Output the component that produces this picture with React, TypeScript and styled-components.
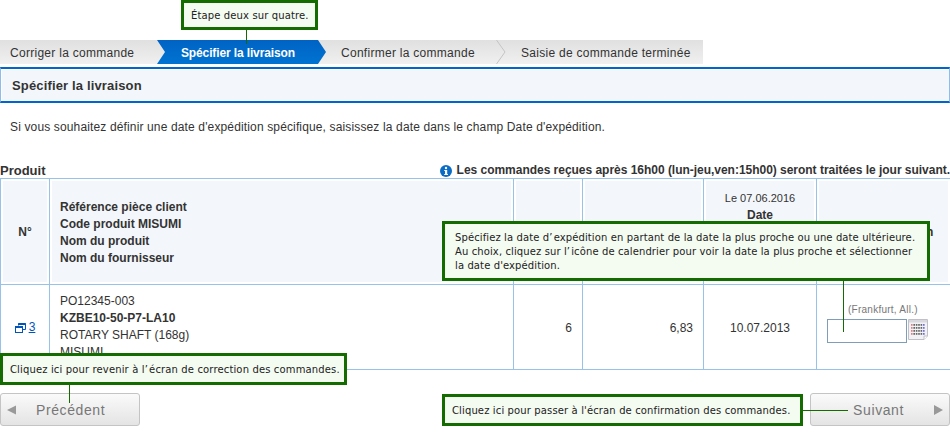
import styled, { createGlobalStyle } from "styled-components";

const GlobalStyle = createGlobalStyle`
  html, body {
    margin: 0;
    padding: 0;
    background: #fff;
  }
  body {
    font-family: "Liberation Sans", Arial, sans-serif;
    font-size: 12px;
    color: #333;
  }
`;

const Page = styled.div`
  position: relative;
  width: 950px;
  height: 440px;
  overflow: hidden;
  padding-top: 40px;
  box-sizing: border-box;
`;

const Steps = styled.div`
  display: flex;
  width: 703px;
  height: 24px;
  background: linear-gradient(#e0e0e0, #f0f0f0);
`;

const Step = styled.div<{ $width: number; $pad: number; $active?: boolean }>`
  position: relative;
  width: ${(props) => props.$width}px;
  padding-left: ${(props) => props.$pad}px;
  box-sizing: border-box;
  line-height: 26px;
  white-space: nowrap;
  letter-spacing: ${(props) => (props.$active ? "-0.13px" : "0.28px")};
  color: ${(props) => (props.$active ? "#fff" : "#333")};
  font-weight: ${(props) => (props.$active ? 700 : 400)};
  background: ${(props) =>
    props.$active ? "linear-gradient(#0063c4, #0073d2)" : "transparent"};
  clip-path: ${(props) =>
    props.$active
      ? "polygon(0 0, 161px 0, 169px 50%, 161px 100%, 0 100%, 8px 50%)"
      : "none"};
`;

const StepChevron = styled.svg`
  position: absolute;
  top: 0;
  right: -9px;
  width: 10px;
  height: 24px;
`;

const Heading = styled.h1`
  margin: 3px 0 0;
  height: 36px;
  box-sizing: border-box;
  border-top: 2px solid #0066cc;
  border-bottom: 2px solid #0066cc;
  border-left: 1px solid #8fbce8;
  border-right: 1px solid #8fbce8;
  background: #f3f7fb;
  box-shadow: inset 0 1px 0 #fff, inset 1px 0 0 #fff;
  padding-left: 11px;
  font-size: 13px;
  line-height: 33px;
  font-weight: 700;
  color: #333;
  letter-spacing: 0.15px;
`;

const Intro = styled.p`
  margin: 16px 0 0 10px;
  line-height: 17px;
  height: 17px;
  letter-spacing: 0.14px;
`;

const Caption = styled.div`
  display: flex;
  justify-content: space-between;
  align-items: flex-end;
  margin-top: 27px;
  height: 15px;
  font-weight: 700;
`;

const CaptionTitle = styled.span`
  font-size: 13px;
  line-height: 15px;
  margin-top: 1px;
`;

const Notice = styled.span`
  display: flex;
  align-items: center;
  gap: 5px;
  font-size: 12px;
  line-height: 15px;
  letter-spacing: -0.025px;
  white-space: nowrap;
`;

const Table = styled.table`
  width: 950px;
  border-collapse: collapse;
  table-layout: fixed;
  line-height: 17px;
`;

const Th = styled.th`
  height: 106px;
  box-sizing: border-box;
  padding: 2px 0 0;
  border: 1px solid #99c2e8;
  background: #f3f7fb;
  box-shadow: inset 0 0 0 2px #fff;
  font-weight: 700;
  text-align: center;
`;

const ThLeft = styled(Th)`
  text-align: left;
  padding-left: 10px;
`;

const ThDate = styled(Th)`
  vertical-align: top;
  padding-top: 11px;
`;

const DateSmall = styled.div`
  font-weight: 400;
  font-size: 11px;
`;

const Td = styled.td`
  height: 85px;
  box-sizing: border-box;
  padding: 3px 0 0;
  border: 1px solid #99c2e8;
  vertical-align: middle;
  text-align: center;
`;

const ProductCell = styled(Td)`
  text-align: left;
  padding: 8px 10px 0;
  vertical-align: top;
  overflow: hidden;
`;

const NumCell = styled(Td)`
  text-align: right;
  padding-right: 10px;
`;

const NoLink = styled.a`
  display: inline-flex;
  align-items: center;
  gap: 3px;
  color: #0055bb;
  text-decoration: underline;
  font-size: 12px;
`;

const ShipCell = styled(Td)`
  padding: 19px 0 0 10px;
  text-align: left;
  vertical-align: top;
`;

const ShipLabel = styled.div`
  font-size: 10px;
  line-height: 12px;
  color: #777;
  padding-left: 21px;
  letter-spacing: 0.25px;
`;

const ShipRow = styled.div`
  display: flex;
  align-items: flex-start;
  gap: 1px;
  margin-top: 3px;
`;

const DateInput = styled.input`
  width: 80px;
  height: 24px;
  box-sizing: border-box;
  border: 1px solid #7f9db9;
  background: #fff;
  padding: 0;
`;

const Nav = styled.div`
  display: flex;
  justify-content: space-between;
  margin-top: 23px;
`;

const NavButton = styled.button<{ $dir: "prev" | "next" }>`
  display: flex;
  flex-direction: ${(props) => (props.$dir === "prev" ? "row" : "row-reverse")};
  align-items: center;
  width: 140px;
  height: 33px;
  box-sizing: border-box;
  padding: 0 6px;
  border: 1px solid #c4c4c4;
  border-radius: 3px;
  background: linear-gradient(#fafafa, #e4e4e4);
  color: #777;
  font-family: inherit;
  font-size: 14px;
  letter-spacing: 0.6px;
`;

const NavLabel = styled.span<{ $dir: "prev" | "next" }>`
  flex: 1;
  text-align: ${(props) => (props.$dir === "prev" ? "left" : "right")};
  padding: ${(props) => (props.$dir === "prev" ? "0 0 0 20px" : "0 30px 0 0")};
`;

const Callout = styled.div<{
  $top: number;
  $left: number;
  $width: number;
  $height: number;
  $pad?: number;
  $spacing?: number;
}>`
  position: absolute;
  top: ${(props) => props.$top}px;
  left: ${(props) => props.$left}px;
  width: ${(props) => props.$width}px;
  height: ${(props) => props.$height}px;
  box-sizing: border-box;
  display: flex;
  align-items: center;
  padding: 2px 0 0 ${(props) => props.$pad ?? 7}px;
  border: 3px solid #146c00;
  background: #f4fbf1;
  color: #222;
  font-family: "DejaVu Sans", sans-serif;
  font-size: 10px;
  line-height: 14px;
  letter-spacing: ${(props) => props.$spacing ?? 0.13}px;
  z-index: 2;
  white-space: nowrap;
`;

const Connector = styled.div<{ $top: number; $left: number; $width: number; $height: number }>`
  position: absolute;
  top: ${(props) => props.$top}px;
  left: ${(props) => props.$left}px;
  width: ${(props) => props.$width}px;
  height: ${(props) => props.$height}px;
  background: #146c00;
  z-index: 1;
`;

const InfoIcon = () => (
  <svg width="12" height="12" viewBox="0 0 12 12">
    <circle cx="6" cy="6" r="6" fill="#0a6cc4" />
    <rect x="5" y="5" width="2.2" height="5" fill="#fff" />
    <rect x="4.2" y="5" width="1.4" height="1" fill="#fff" />
    <rect x="4.2" y="9" width="3.8" height="1" fill="#fff" />
    <circle cx="6" cy="3" r="1.2" fill="#fff" />
  </svg>
);

const WindowIcon = () => (
  <svg width="11" height="10" viewBox="0 0 11 10">
    <path d="M3.5 2.5V0.5H10.5V6.5H8" fill="none" stroke="#0055bb" />
    <rect x="3.5" y="0" width="7" height="2" fill="#0055bb" />
    <rect x="0.5" y="3.5" width="7" height="6" fill="#fff" stroke="#0055bb" />
    <rect x="0" y="3" width="8" height="2" fill="#0055bb" />
  </svg>
);

const CalendarIcon = () => {
  const colors = ["#e08080", "#666", "#666", "#666", "#666", "#7070d8"];
  return (
    <svg width="20" height="21" viewBox="0 0 20 21">
      <path d="M0.5 0.5H19.5V17L16 20.5H0.5Z" fill="#f2f2f6" stroke="#c0c0c6" />
      <rect x="1" y="1" width="18" height="2.5" fill="#d8d8de" />
      {[5, 8, 11, 14].map((y) =>
        colors.map((c, i) => (
          <rect key={`${y}-${i}`} x={3 + i * 2.4} y={y} width="1.6" height="1.8" fill={c} />
        ))
      )}
      <path d="M16 20.5V17H19.5" fill="#fff" stroke="#c0c0c6" />
    </svg>
  );
};

const Triangle = ({ dir }: { dir: "prev" | "next" }) => (
  <svg width="9" height="10" viewBox="0 0 9 10">
    <path d={dir === "prev" ? "M9 0.5V9.5L0 5Z" : "M0 0V10L9 5Z"} fill="#999" />
  </svg>
);

export default function App() {
  return (
    <Page>
      <GlobalStyle />
      <Steps>
        <Step $width={157} $pad={10}>Corriger la commande</Step>
        <Step $width={169} $pad={24} $active>Spécifier la livraison</Step>
        <Step $width={171} $pad={15}>
          Confirmer la commande
          <StepChevron viewBox="0 0 10 24">
            <path d="M0.5 0L9 12L0.5 24" fill="none" stroke="#c4c4c4" />
          </StepChevron>
        </Step>
        <Step $width={206} $pad={24}>Saisie de commande terminée</Step>
      </Steps>

      <Heading>Spécifier la livraison</Heading>

      <Intro>
        Si vous souhaitez définir une date d'expédition spécifique, saisissez la date dans le
        champ Date d'expédition.
      </Intro>

      <Caption>
        <CaptionTitle>Produit</CaptionTitle>
        <Notice>
          <InfoIcon />
          Les commandes reçues après 16h00 (lun-jeu,ven:15h00) seront traitées le jour suivant.
        </Notice>
      </Caption>

      <Table>
        <colgroup>
          <col width="49" />
          <col width="464" />
          <col width="69" />
          <col width="121" />
          <col width="113" />
          <col width="134" />
        </colgroup>
        <thead>
          <tr>
            <Th>N°</Th>
            <ThLeft>
              Référence pièce client
              <br />
              Code produit MISUMI
              <br />
              Nom du produit
              <br />
              Nom du fournisseur
            </ThLeft>
            <Th />
            <Th />
            <ThDate>
              <DateSmall>Le 07.06.2016</DateSmall>
              Date
            </ThDate>
            <Th>Date d'expédition</Th>
          </tr>
        </thead>
        <tbody>
          <tr>
            <Td>
              <NoLink>
                <WindowIcon />3
              </NoLink>
            </Td>
            <ProductCell>
              PO12345-003
              <br />
              <b>KZBE10-50-P7-LA10</b>
              <br />
              ROTARY SHAFT (168g)
              <br />
              MISUMI
            </ProductCell>
            <NumCell>6</NumCell>
            <NumCell>6,83</NumCell>
            <Td>10.07.2013</Td>
            <ShipCell>
              <ShipLabel>(Frankfurt, All.)</ShipLabel>
              <ShipRow>
                <DateInput />
                <CalendarIcon />
              </ShipRow>
            </ShipCell>
          </tr>
        </tbody>
      </Table>

      <Nav>
        <NavButton $dir="prev">
          <Triangle dir="prev" />
          <NavLabel $dir="prev">Précédent</NavLabel>
        </NavButton>
        <NavButton $dir="next">
          <Triangle dir="next" />
          <NavLabel $dir="next">Suivant</NavLabel>
        </NavButton>
      </Nav>

      <Callout $top={0} $left={181} $width={137} $height={30}>Étape deux sur quatre.</Callout>
      <Connector $top={30} $left={246} $width={1} $height={14} />

      <Callout $top={221} $left={442} $width={488} $height={60} $pad={10} $spacing={0.11}>
        <div>
          Spécifiez la date d’&#8202;expédition en partant de la date la plus proche ou une date ultérieure.
          <br />
          Au choix, cliquez sur l’&#8202;icône de calendrier pour voir la date la plus proche et sélectionner
          <br />
          la date d'expédition.
        </div>
      </Callout>
      <Connector $top={281} $left={843} $width={1} $height={51} />

      <Callout $top={353} $left={0} $width={347} $height={32} $spacing={0.14}>
        Cliquez ici pour revenir à l’&#8202;écran de correction des commandes.
      </Callout>
      <Connector $top={385} $left={69} $width={1} $height={18} />

      <Callout $top={394} $left={442} $width={361} $height={32}>
        Cliquez ici pour passer à l'écran de confirmation des commandes.
      </Callout>
      <Connector $top={410} $left={803} $width={45} $height={1} />
    </Page>
  );
}
